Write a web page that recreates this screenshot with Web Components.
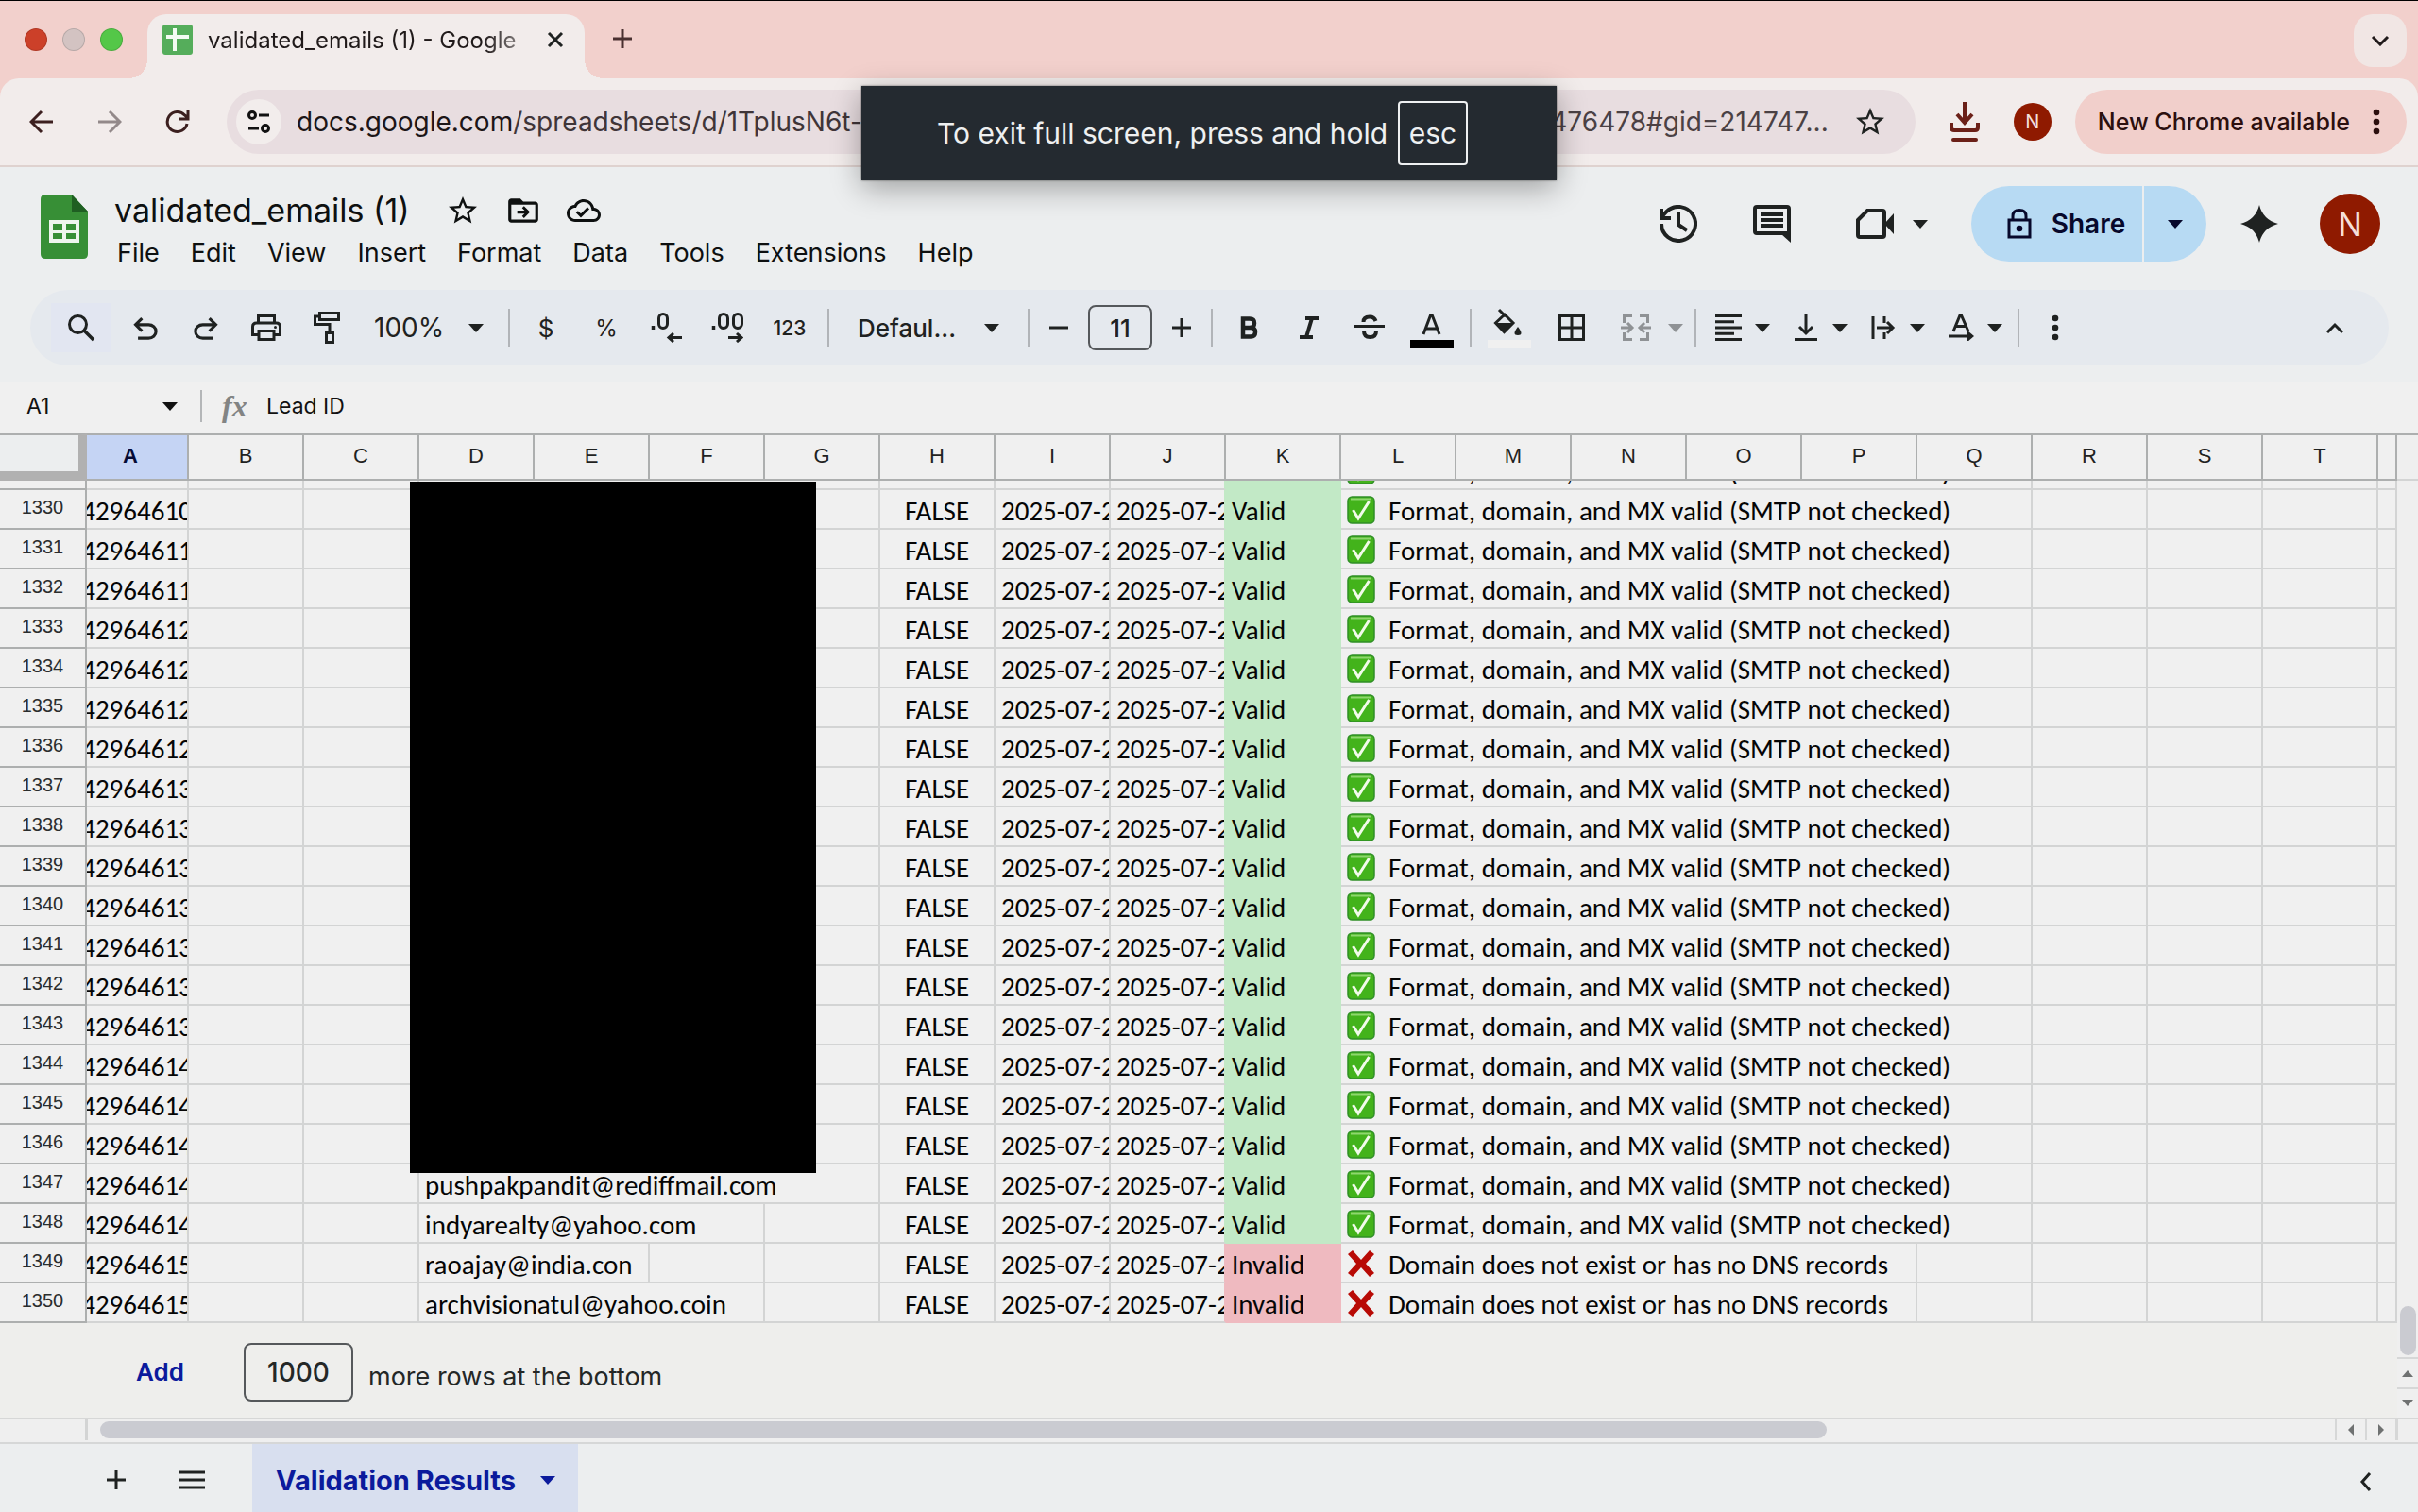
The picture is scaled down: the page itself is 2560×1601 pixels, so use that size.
<!DOCTYPE html>
<html lang="en">
<head>
<meta charset="utf-8">
<title>validated_emails (1) - Google Sheets</title>
<style>
html,body{margin:0;height:100%}
body{font-family:Inter,"Liberation Sans",sans-serif;color:#1f2221;background:#eceeef;overflow:hidden}
</style>
</head>
<body>
<spreadsheet-window></spreadsheet-window>
<script>
const RESET = `
*{box-sizing:border-box}
button,input,select{font:inherit;color:inherit;background:none;border:0;margin:0;padding:0;outline:0}
button{display:flex;align-items:center;justify-content:center;cursor:pointer}
select{appearance:none;-webkit-appearance:none}
a{color:inherit;text-decoration:none}
`;
function component(name, css, html) {
  const tpl = document.createElement('template');
  tpl.innerHTML = `<style>${RESET}${css}</style>${html}`;
  customElements.define(name, class extends HTMLElement {
    constructor() {
      super();
      this.attachShadow({mode: 'open'}).append(tpl.content.cloneNode(true));
    }
  });
}

/* icon set: [width, height, viewBox, markup] */
const F = 'fill="currentColor" stroke="none"';
const ICONS = {
  caret: [16, 9, '0 0 16 9', `<path ${F} d="M0 0h16L8 9z"/>`],
  plus: [22, 22, '0 0 22 22', `<path stroke-width="3" d="M11 1v20M1 11h20"/>`],
  minus: [22, 22, '0 0 22 22', `<path d="M1 11h20" stroke-width="3"/>`],
  close: [18, 18, '0 0 18 18', `<path stroke-width="3" d="M2 2l14 14M16 2L2 16"/>`],
  chevdown: [20, 12, '0 0 20 12', `<path stroke-width="3" d="M2 2l8 8 8-8"/>`],
  chevup: [20, 12, '0 0 20 12', `<path stroke-width="3" d="M2 11l8-8 8 8"/>`],
  chevleft: [14, 22, '0 0 14 22', `<path stroke-width="3" d="M12 2L4 11l8 9"/>`],
  favicon: [32, 32, '0 0 32 32', `<rect ${F} width="32" height="32" rx="3"/><path stroke="#f2fbf2" stroke-width="4" d="M4 13h24M13 4v24"/>`],
  back: [26, 26, '0 0 26 26', `<path stroke-width="3" d="M25 13H3M13 2L2 13l11 11"/>`],
  forward: [26, 26, '0 0 26 26', `<path stroke-width="3" d="M1 13h22M13 2l11 11-11 11"/>`],
  reload: [26, 26, '0 0 26 26', `<path stroke-width="3" d="M23 15A10.500 10.500 0 1 1 20.500 6L24 9M24 1v9h-9"/>`],
  tune: [26, 26, '0 0 26 26', `<g stroke-width="3"><circle cx="6" cy="6" r="3.500"/><path d="M13 6h11M2 20h11"/><circle cx="20" cy="20" r="3.500"/></g>`],
  star: [36, 36, '0 0 24 24', `<path ${F} d="M22 9.240l-7.190-.620L12 2 9.190 8.630 2 9.240l5.460 4.730L5.820 21 12 17.270 18.180 21l-1.630-7.030L22 9.240zM12 15.400l-3.760 2.270 1-4.280-3.320-2.880 4.380-.380L12 6.100l1.710 4.040 4.380.380-3.320 2.880 1 4.280L12 15.400z"/>`],
  download: [32, 42, '0 0 32 42', `<path stroke-width="4" d="M16 0v22M8 13l8 9 8-9M2 22v5q0 3 3 3h22q3 0 3-3v-5"/><path stroke-width="4" stroke-linecap="round" d="M4 40h24"/>`],
  dots: [8, 28, '0 0 8 28', `<g ${F}><circle cx="4" cy="4" r="3.300"/><circle cx="4" cy="14" r="3.300"/><circle cx="4" cy="24" r="3.300"/></g>`],
  sheets: [50, 68, '0 0 50 68', `<path fill="#378f36" stroke="none" d="M5 0h28l17 18v45q0 5-5 5H5q-5 0-5-5V5q0-5 5-5z"/><path fill="#1f5f22" stroke="none" d="M33 0l17 18H33z"/><path fill="#eef5ee" stroke="none" d="M9 27h32v24H9z"/><path fill="#378f36" stroke="none" d="M13 31h10v7H13zM27 31h10v7H27zM13 41h10v6H13zM27 41h10v6H27z"/>`],
  move: [38, 38, '0 0 24 24', `<path ${F} d="M20 6h-8l-2-2H4c-1.100 0-2 .900-2 2v12c0 1.100.900 2 2 2h16c1.100 0 2-.900 2-2V8c0-1.100-.900-2-2-2zm0 12H4V8h16v10z"/><path ${F} d="M12.500 17l4-4-4-4-1.300 1.300 1.700 1.700H8v2h4.900l-1.700 1.700z"/>`],
  cloud: [36, 36, '0 0 24 24', `<path ${F} d="M19.350 10.040C18.670 6.590 15.640 4 12 4 9.110 4 6.600 5.640 5.350 8.040 2.340 8.360 0 10.910 0 14c0 3.310 2.690 6 6 6h13c2.760 0 5-2.240 5-5 0-2.640-2.050-4.780-4.650-4.960zM19 18H6c-2.210 0-4-1.790-4-4 0-2.050 1.530-3.760 3.560-3.970l1.070-.110.500-.950C8.080 7.140 9.940 6 12 6c2.620 0 4.880 1.860 5.390 4.430l.300 1.500 1.530.110c1.560.100 2.780 1.410 2.780 2.960 0 1.650-1.350 3-3 3zm-9-3.820l-2.090-2.090L6.500 13.500 10 17l6.010-6.010-1.410-1.410z"/>`],
  history: [40, 40, '0 0 40 40', `<path stroke-width="4" d="M2 20a18 18 0 1 0 5.500-13L2 13M2 4v10h10M20 8v13l9 6"/>`],
  comment: [40, 40, '0 0 40 40', `<path stroke-width="4" d="M4 2h32q2 0 2 2v26H4q-2 0-2-2V4q0-2 2-2z"/><path ${F} d="M30 31h10v9z"/><path stroke-width="4" d="M8 10h24M8 16h24M8 22h24"/>`],
  camera: [40, 32, '0 0 40 32', `<path stroke-width="4" d="M2 12L12 2h16q2 0 2 2v24q0 2-2 2H4q-2 0-2-2z"/><path ${F} d="M30 16l10-11v22z"/>`],
  lock: [26, 32, '0 0 26 32', `<path stroke-width="3" d="M2 12h22v18H2zM6 12V8q0-6.500 7-6.500T20 8v4"/><circle ${F} cx="13" cy="21" r="3.300"/>`],
  spark: [40, 40, '0 0 40 40', `<path ${F} d="M20 0Q24 16 40 20 24 24 20 40 16 24 0 20 16 16 20 0z"/>`],
  search: [30, 30, '0 0 30 30', `<circle stroke-width="3" cx="11.500" cy="11.500" r="9"/><path stroke-width="3.500" d="M18 18l10 10"/>`],
  undo: [38, 38, '0 0 24 24', `<path ${F} d="M7 20v-2h7.100q1.575 0 2.738-1T18 14.500 16.838 12 14.100 11H7.800l2.600 2.600L9 15 4 10l5-5 1.400 1.400L7.800 9h6.300q2.425 0 4.163 1.575T20 14.500t-1.737 3.925T14.100 20z"/>`],
  redo: [38, 38, '0 0 24 24', `<path ${F} d="M17 20v-2H9.900q-1.575 0-2.738-1T6 14.500 7.162 12 9.900 11h6.300l-2.600 2.600L15 15l5-5-5-5-1.400 1.400L16.200 9H9.900Q7.475 9 5.737 10.575T4 14.500t1.737 3.925T9.900 20z"/>`],
  print: [32, 28, '0 0 32 28', `<g stroke-width="3"><path d="M7.500 9V1.500h17V9M7 21.500H1.500V13q0-4 4-4h21q4 0 4 4v8.500H25"/><path d="M8 17.500h16v9H8z"/></g><circle ${F} cx="25.500" cy="13.500" r="1.500"/>`],
  roller: [28, 34, '0 0 28 34', `<g stroke-width="3"><path d="M6.500 1.500h20v7h-20zM6 5H1.500v8.500h15.500V22"/><path d="M13.500 22.500h7v10h-7z"/></g>`],
  decless: [34, 32, '0 0 34 32', `<path stroke-width="3.500" d="M2.500 14v4"/><rect stroke-width="3" x="8.500" y="1.500" width="9" height="15" rx="4.500"/><path stroke-width="3" d="M33 26.500H19M24 22l-5 4.500 5 4.500"/>`],
  decmore: [34, 32, '0 0 34 32', `<path stroke-width="3.500" d="M2.500 14v4"/><rect stroke-width="3" x="8.500" y="1.500" width="9" height="15" rx="4.500"/><rect stroke-width="3" x="23.500" y="1.500" width="9" height="15" rx="4.500"/><path stroke-width="3" d="M18 26.500h14M27 22l5 4.500-5 4.500"/>`],
  bold: [20, 24, '0 0 20 24', `<path stroke-width="4.500" d="M4 2.500h7q5 0 5 4.700T11 12H4zM4 12h8q5 0 5 4.700t-5 4.800H4zM4 1v22"/>`],
  italic: [20, 24, '0 0 20 24', `<path stroke-width="4" d="M6 2h14M0 22h14M13 2L7 22"/>`],
  strike: [32, 28, '0 0 32 28', `<path stroke-width="3" d="M0 12.500h32"/><path stroke-width="4" d="M9.500 8q0-5.500 6.500-5.500Q21 2.500 22.500 7M10 17.500q0 6.500 6.500 6.500t6.500-6.500"/>`],
  textcolor: [46, 42, '0 0 46 42', `<path stroke-width="3" d="M14 28l7.500-20h1.800l7.700 20M17 22h11"/><path fill="#000" stroke="none" d="M0 34h46v8H0z"/>`],
  fill: [46, 42, '0 0 46 42', `<path stroke-width="3" d="M12 2l7 7M18 7l9 9-9.500 9.500L8.500 16z"/><path ${F} d="M9 16h18l-9.500 10.500zM32 20q7 9 0 9t0-9z"/><path fill="#f0f0f0" stroke="none" d="M0 34h46v8H0z"/>`],
  borders: [28, 28, '0 0 28 28', `<path stroke-width="3" d="M1.500 1.500h25v25h-25zM14 1v26M1 14h26"/>`],
  merge: [32, 28, '0 0 32 28', `<path stroke-width="3" d="M12 1.500H3.500V9M20 1.500h8.500V9M12 26.500H3.500V19M20 26.500h8.500V19M0 14h12M7 9l5 5-5 5M32 14H20M25 9l-5 5 5 5"/>`],
  align: [32, 28, '0 0 32 28', `<path stroke-width="3" d="M2 1.500h28M2 7.750h20M2 14h28M2 20.250h20M2 26.500h28"/>`],
  valign: [32, 28, '0 0 32 28', `<path stroke-width="3" d="M16 0v19M9 13l7 7 7-7M4 26.500h24"/>`],
  wrap: [32, 28, '0 0 32 28', `<path stroke-width="3" d="M5 2v24M17 2v7M17 19v7M9 14h17M20 8l6 6-6 6"/>`],
  rotate: [32, 28, '0 0 32 28', `<path stroke-width="3" d="M8 18l7-17h1.500L24 18M10.500 12.500h10M3 23h25"/><path ${F} d="M23 17l7 6-7 6z"/>`],
  menu: [28, 20, '0 0 28 20', `<path stroke-width="3" d="M0 2h28M0 10h28M0 18h28"/>`],
  left: [8, 12, '0 0 8 12', `<path ${F} d="M7 0v12L1 6z"/>`],
  right: [8, 12, '0 0 8 12', `<path ${F} d="M1 0v12l6-6z"/>`],
  up: [12, 8, '0 0 12 8', `<path ${F} d="M0 8h12L6 1z"/>`],
  down: [12, 8, '0 0 12 8', `<path ${F} d="M0 0h12L6 7z"/>`],
  valid: [30, 30, '0 0 30 30', `<rect x="1" y="1" width="28" height="28" rx="4.500" fill="#43b31b" stroke="#2f8f26" stroke-width="1.500"/><path d="M4 3.500h22" stroke="#8fd66f" stroke-width="2"/><path d="M6.500 15l5.500 9L23.500 6" stroke="#f2fbea" stroke-width="3"/>`],
  invalid: [30, 30, '0 0 30 30', `<path ${F} d="M6 1l9 10 9-10 5 4-9 10 9 10-5 4-9-10-9 10-5-4 9-10L1 5z"/>`]
};
customElements.define('ui-icon', class extends HTMLElement {
  connectedCallback() {
    if (this.shadowRoot) return;
    const [w, h, box, body] = ICONS[this.getAttribute('name')];
    this.attachShadow({mode: 'open'}).innerHTML =
      `<style>:host{display:inline-flex;flex:none}svg{display:block}</style>
       <svg width="${w}" height="${h}" viewBox="${box}" fill="none" stroke="currentColor" aria-hidden="true">${body}</svg>`;
  }
});
const icon = n => `<ui-icon name="${n}"></ui-icon>`;

component('tab-strip', `
:host{display:flex;height:83px;border-top:1px solid #000;background:#f2d0cc;padding:0 12px 0 26px}
.lights{display:flex;gap:16px;align-items:center;width:130px}
.lights i{width:24px;height:24px;border-radius:50%;border:1px solid #0002}
.tab{position:relative;display:flex;align-items:center;width:463px;margin-top:14px;padding:0 22px 14px 16px;background:#f2eceb;border-radius:20px 20px 0 0}
.tab::before,.tab::after{content:"";position:absolute;bottom:0;width:20px;height:20px}
.tab::before{left:-20px;background:radial-gradient(circle at 0 0,#0000 20px,#f2eceb 20px)}
.tab::after{right:-20px;background:radial-gradient(circle at 100% 0,#0000 20px,#f2eceb 20px)}
.tab>ui-icon{color:#55ad5b}
.name{flex:1;margin:0 12px 0 16px;font-size:24px;white-space:nowrap;overflow:hidden;color:#201a1a;
 -webkit-mask-image:linear-gradient(90deg,#000 84%,#0006 98%)}
.new{width:80px;height:80px;color:#4a3030}
.list{width:56px;height:56px;margin:14px 0 0 auto;border-radius:20px;background:#f1e6e4;color:#201a1a}
`, `
<div class="lights"><i style="background:#cc4029"></i><i style="background:#d3c3c2"></i><i style="background:#54c748"></i></div>
<div class="tab">${icon('favicon')}<span class="name">validated_emails (1) - Google</span><button aria-label="Close tab">${icon('close')}</button></div>
<button class="new" aria-label="New tab">${icon('plus')}</button>
<button class="list" aria-label="Search tabs">${icon('chevdown')}</button>
`);

component('address-bar', `
:host{display:block;background:#f2d0cc}
.bar{display:flex;align-items:center;height:94px;padding:0 12px 0 8px;background:#f2eceb;border-bottom:2px solid #dfd2cf;border-radius:20px 20px 0 0}
.nav{width:72px;height:68px;color:#3c1f1f}
.nav.off{color:#93898a}
.url{display:flex;align-items:center;flex:1;min-width:0;height:68px;margin-left:16px;padding:0 30px 0 10px;border-radius:34px;background:#e8dde0;font-size:28px;white-space:nowrap}
.site{width:48px;height:48px;border-radius:50%;background:#f2edec;color:#111;margin-right:16px}
.host{color:#1c1517}.path{color:#3f3538}.tail{margin-left:auto;margin-right:26px;color:#4b4144}
.dl{width:104px;color:#6b2018}
.me{width:40px;height:40px;border-radius:50%;background:#8f1a00;color:#f4dfda;font-size:20px;flex:none}
.update{height:68px;margin-left:25px;padding:0 28px 0 24px;gap:24px;border-radius:34px;background:#f1cfcb;color:#2c0f0e;font-size:25px;font-weight:500;white-space:nowrap}
`, `
<div class="bar">
<button class="nav" aria-label="Back">${icon('back')}</button>
<button class="nav off" aria-label="Forward">${icon('forward')}</button>
<button class="nav" aria-label="Reload">${icon('reload')}</button>
<div class="url"><button class="site" aria-label="Site information">${icon('tune')}</button><span class="host">docs.google.com</span><span class="path">/spreadsheets/d/1TplusN6t-c</span><span class="tail">476478#gid=214747...</span><button aria-label="Bookmark">${icon('star')}</button></div>
<button class="dl" aria-label="Downloads">${icon('download')}</button>
<button class="me" aria-label="Profile">N</button>
<button class="update">New Chrome available${icon('dots')}</button>
</div>
`);

component('doc-header', `
:host{display:flex;align-items:center;height:130px;padding:0 40px 0 43px;color:#1f2221}
.info{display:flex;flex-direction:column;margin-left:28px;padding-top:6px}
.title{display:flex;align-items:center;height:46px;color:#0e1010}
h1{margin:0 24px 0 0;font-size:34px;font-weight:400;line-height:44px}
.title button{width:64px}
nav{display:flex;gap:33px;padding-left:3px;font-size:27px;line-height:44px;color:#0e1010}
.right{display:flex;align-items:center;margin:0 0 10px auto}
.icon{width:99px;height:80px}
.meet{width:162px;height:80px;gap:20px;padding-right:6px}
.share{display:flex;height:80px;border-radius:40px;overflow:hidden;color:#07082b;font-size:28px;gap:2px;background:#eceeef}
.share button{background:#b7daf3}
.share .main{width:181px;gap:21px;padding-left:20px;font-weight:600}
.share .more{width:66px}
.spark{width:112px;height:80px;margin-right:8px}
.me{width:64px;height:64px;border-radius:50%;background:#8f1a00;color:#f4dfda;font-size:34px}
`, `
<a href="#" aria-label="Sheets home">${icon('sheets')}</a>
<div class="info">
<div class="title"><h1>validated_emails (1)</h1><button aria-label="Star">${icon('star')}</button><button aria-label="Move">${icon('move')}</button><button aria-label="Saved to Drive">${icon('cloud')}</button></div>
<nav><button>File</button><button>Edit</button><button>View</button><button>Insert</button><button>Format</button><button>Data</button><button>Tools</button><button>Extensions</button><button>Help</button></nav>
</div>
<div class="right">
<button class="icon" aria-label="Version history">${icon('history')}</button>
<button class="icon" aria-label="Comments">${icon('comment')}</button>
<button class="meet" aria-label="Join a call">${icon('camera')}${icon('caret')}</button>
<div class="share"><button class="main">${icon('lock')}Share</button><button class="more" aria-label="Share options">${icon('caret')}</button></div>
<button class="spark" aria-label="Gemini">${icon('spark')}</button>
<button class="me" aria-label="Account">N</button>
</div>
`);

component('tool-bar', `
:host{display:flex;align-items:center;height:80px;margin:0 31px 18px 32px;padding:0 25px 0 22px;border-radius:40px;background:#e5e9ee;color:#1f2221;font-size:26px}
button{width:64px;height:52px;flex:none}
button.find{background:#e2e6f1;margin-right:4px}
button.wide{width:68px}
button.step{width:50px}
button.dd{width:82px;justify-content:flex-start;padding-left:12px;gap:12px}
button.merge{width:92px;justify-content:flex-start;padding-left:20px;gap:18px;color:#8f9295}
.num{font-size:21px;font-weight:500}
.pct{font-size:24px}
hr{width:2px;height:40px;margin:0 6px;border:0;background:#b1b4b8;flex:none}
label{display:flex;align-items:center;justify-content:space-between;flex:none}
.zoom{width:154px;padding:0 20px 0 18px;font-size:28px}
.face{width:198px;padding:0 24px;font-weight:500}
.size{width:68px;height:48px;margin:0 6px;border:2px solid #55585b;border-radius:8px;text-align:center;font-weight:500}
.last{margin-left:auto}
`, `
<button class="find" aria-label="Search the menus">${icon('search')}</button>
<button aria-label="Undo">${icon('undo')}</button><button aria-label="Redo">${icon('redo')}</button>
<button aria-label="Print">${icon('print')}</button><button aria-label="Paint format">${icon('roller')}</button>
<label class="zoom"><select aria-label="Zoom"><option>100%</option></select>${icon('caret')}</label><hr>
<button aria-label="Currency">$</button><button aria-label="Percent" class="pct">%</button>
<button aria-label="Decrease decimal places">${icon('decless')}</button><button aria-label="Increase decimal places">${icon('decmore')}</button>
<button class="num wide">123</button><hr>
<label class="face"><select aria-label="Font"><option>Defaul...</option></select>${icon('caret')}</label><hr>
<button class="step" aria-label="Decrease font size">${icon('minus')}</button><input class="size" aria-label="Font size" value="11"><button class="step" aria-label="Increase font size">${icon('plus')}</button><hr>
<button aria-label="Bold">${icon('bold')}</button><button aria-label="Italic">${icon('italic')}</button><button aria-label="Strikethrough">${icon('strike')}</button><button class="wide" aria-label="Text colour">${icon('textcolor')}</button><hr>
<button class="wide" aria-label="Fill colour">${icon('fill')}</button><button aria-label="Borders">${icon('borders')}</button><button class="merge" aria-label="Merge cells" disabled>${icon('merge')}${icon('caret')}</button><hr>
<button class="dd" aria-label="Horizontal align">${icon('align')}${icon('caret')}</button><button class="dd" aria-label="Vertical align">${icon('valign')}${icon('caret')}</button><button class="dd" aria-label="Text wrapping">${icon('wrap')}${icon('caret')}</button><button class="dd" aria-label="Text rotation">${icon('rotate')}${icon('caret')}</button><hr>
<button aria-label="More">${icon('dots')}</button>
<button class="last" aria-label="Hide the menus">${icon('chevup')}</button>
`);

component('formula-bar', `
:host{display:flex;align-items:center;height:54px;padding-bottom:4px;background:#f0f0f0;font-size:23px;color:#111}
.cell{width:172px;padding-left:28px}
hr{width:2px;height:34px;margin:0 21px 0 24px;border:0;background:#b4b6b8}
.fx{width:47px;font:italic 700 32px/40px "Liberation Serif",serif;color:#828484}
.value{flex:1}
`, `
<input class="cell" aria-label="Name box" value="A1">${icon('caret')}<hr>
<span class="fx">fx</span><input class="value" aria-label="Formula" value="Lead ID">
`);

const letters = 'ABCDEFGHIJKLMNOPQRST'.split('');
const endings = '10 11 11 12 12 12 12 13 13 13 13 13 13 13 14 14 14 14 14 15 15'.split(' ');
const emails = {1347: ['pushpakpandit@rediffmail.com', 4], 1348: ['indyarealty@yahoo.com', 3], 1349: ['raoajay@india.con', 2], 1350: ['archvisionatul@yahoo.coin', 3]};
const td = (text = '', span = 1, cls = '') => `<td${span > 1 ? ` colspan="${span}"` : ''}${cls ? ` class="${cls}"` : ''}><div>${text}</div></td>`;
function sheetRow(n, ending, cut) {
  const bad = n >= 1349, [mail, span] = emails[n] || ['', 4];
  const shade = bad ? 'bad' : 'good';
  return `<tr${cut ? ' class="cut"' : ''}><th scope="row"><div>${cut ? '' : n}</div></th>` +
    td(`<span>429646${ending}</span>`, 1, 'id') + td() + td() + td(mail && `<span>${mail}</span>`, span) + td().repeat(4 - span) +
    td('<span>FALSE</span>', 1, 'mid') + td('<span>2025-07-2</span>') + td('<span>2025-07-2</span>', 1, 'pre ' + shade) +
    td(`<span>${bad ? 'Invalid' : 'Valid'}</span>`, 1, 'state ' + shade) +
    td(bad ? `${icon('invalid')}<span>Domain does not exist or has no DNS records</span>` : `${icon('valid')}<span>Format, domain, and MX valid (SMTP not checked)</span>`, bad ? 5 : 6, bad ? 'no' : '') +
    td().repeat(bad ? 5 : 4) + '</tr>';
}
component('sheet-grid', `
:host{display:block;position:relative;background:#f0f0f0}
table{width:100%;table-layout:fixed;border-collapse:separate;border-spacing:0}
.rh{width:92px}.ca{width:108px}.cc{width:122px}
thead th{height:50px;padding:0 0 2px;border:solid #adafaf;border-width:2px 2px 2px 0;font:400 22px "Liberation Sans",sans-serif;color:#1f2221}
thead th.corner{background:#eceeef;border-right:9px solid #b1b1b1;border-bottom:10px solid #b1b1b1}
thead th.on{background:#c5d4f4;color:#050b35;font-weight:700;padding-right:14px}
tbody th{padding:0;border:solid #adafaf;border-width:0 2px 2px 0;font:400 20px/36px "Liberation Sans",sans-serif;color:#2b2d2d}
tbody th div{height:40px}
td{padding:0;border:solid #d3d4d4;border-width:0 2px 2px 0;font:29px/36px Carlito,Lato,sans-serif;color:#050505}
td div{display:flex;align-items:flex-end;height:40px;padding-left:6px;overflow:hidden;white-space:nowrap}
td.id div,td.mid div{justify-content:center;padding:0}
td ui-icon{margin:0 14px 4px 0}
.cut div{height:8px}
.pre.good{border-right-color:#c2e9c6}.pre.bad{border-right-color:#efbac0}
.state.good{background:#c2e9c6;border-color:#c2e9c6}
.state.bad{background:#efbac0;border-color:#efbac0}
.no ui-icon{color:#b80a05}
.mask{position:absolute;left:434px;top:51px;bottom:159px;width:430px;background:#000}
`, `
<table><colgroup><col class="rh"><col class="ca">${'<col class="cc">'.repeat(19)}<col></colgroup>
<thead><tr><th class="corner"></th>${letters.map((l, i) => `<th scope="col"${i ? '' : ' class="on"'}>${l}</th>`).join('')}<th></th></tr></thead>
<tbody>${sheetRow(1329, '10', true)}${endings.map((e, i) => sheetRow(1330 + i, e)).join('')}</tbody></table>
<div class="mask"></div>
`);

component('add-rows', `
:host{display:flex;align-items:flex-start;height:100px;padding:21px 0 0 144px;background:#eeeeec;color:#242726;font-size:27px}
button{height:60px;margin-right:63px;font-size:26px;font-weight:600;color:#0b1a9c}
input{width:116px;height:62px;margin-right:16px;border:2px solid #55585b;border-radius:8px;text-align:center;font-size:28px;font-weight:500}
label{line-height:72px}
`, `<button>Add</button><input id="n" value="1000"><label for="n">more rows at the bottom</label>`);

component('side-scroll', `
:host{display:flex;flex-direction:column;justify-content:flex-end;width:22px;border-top:2px solid #adafaf;background:#efefef;color:#6f7171}
.head{height:48px;border-bottom:2px solid #d3d4d4;margin-bottom:auto}
i{display:block;width:17px;height:52px;margin:0 auto 2px 3px;border-radius:9px;background:#cacbd1}
button{height:32px;border-top:2px solid #d6d7d7}
`, `<div class="head"></div><i></i><button aria-label="Scroll up">${icon('up')}</button><button aria-label="Scroll down">${icon('down')}</button>`);

component('bottom-scroll', `
:host{display:flex;height:28px;border:solid #d6d7d7;border-width:2px 0;background:#efefef;color:#6f7171}
.gut{width:93px;border-right:3px solid #d3d4d4;height:22px}
.track{flex:1;padding:2px 0 0 13px}
i{display:block;width:calc(100% * 17 / 22);height:18px;border-radius:9px;background:#cacbd1}
button{width:32px;height:22px;border-left:2px solid #d6d7d7}
.end{width:24px;height:22px;border-left:3px solid #d6d7d7}
`, `<div class="gut"></div><div class="track"><i></i></div><button aria-label="Scroll left">${icon('left')}</button><button aria-label="Scroll right">${icon('right')}</button><div class="end"></div>`);

component('sheet-tabs', `
:host{display:flex;flex:1;align-items:stretch;padding:0 24px 0 83px;color:#1f2221}
.tool{width:80px;padding-top:3px}
.active{margin-left:24px;padding:5px 24px 0 25px;gap:26px;background:#d8dfef;color:#0b1a9c;font-size:29px;font-weight:700}
.last{width:64px;margin-left:auto;padding-top:8px}
`, `<button class="tool" aria-label="Add sheet">${icon('plus')}</button><button class="tool" aria-label="All sheets">${icon('menu')}</button>
<button class="active">Validation Results${icon('caret')}</button><button class="last" aria-label="Show side panel">${icon('chevleft')}</button>`);

component('fullscreen-hint', `
:host{position:absolute;left:50%;top:91px;margin-left:-368px;width:736px;height:100px;display:flex;align-items:center;padding:0 0 0 80px;background:#242a30;color:#eef0f1;font-size:30px;white-space:nowrap;box-shadow:0 8px 30px #0005,0 0 2px #0008}
kbd{display:flex;align-items:center;justify-content:center;width:74px;height:68px;margin-left:11px;border:2px solid #eef0f1;border-radius:4px;font:inherit}
`, `<span>To exit full screen, press and hold</span><kbd>esc</kbd>`);

component('spreadsheet-window', `
:host{display:flex;flex-direction:column;min-height:100vh;background:#eceeef}
.sheet{display:flex}
.main{flex:1;min-width:0}
`, `
<tab-strip></tab-strip><address-bar></address-bar>
<doc-header></doc-header><tool-bar></tool-bar><formula-bar></formula-bar>
<div class="sheet"><div class="main"><sheet-grid></sheet-grid><add-rows></add-rows></div><side-scroll></side-scroll></div>
<bottom-scroll></bottom-scroll><sheet-tabs></sheet-tabs>
<fullscreen-hint></fullscreen-hint>
`);
</script>
</body>
</html>
